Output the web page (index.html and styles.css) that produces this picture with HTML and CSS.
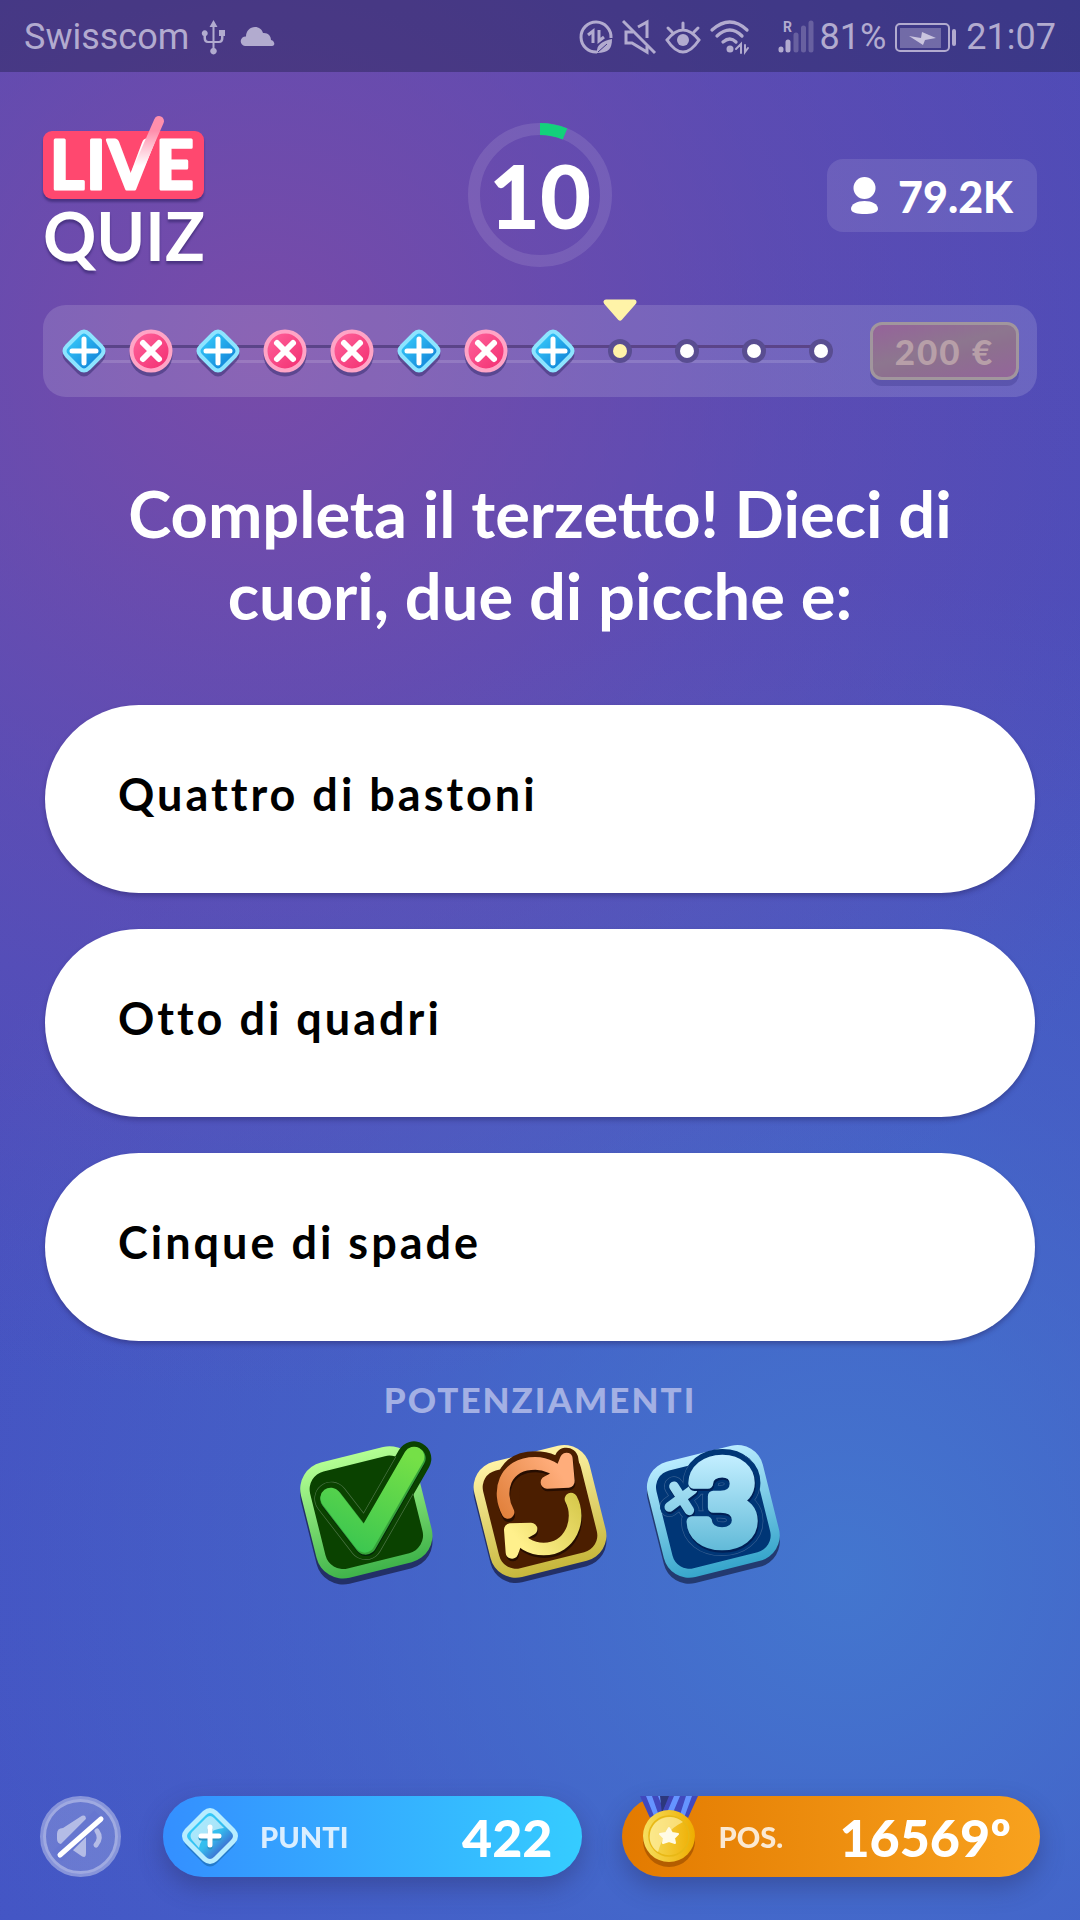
FILE: index.html
```html
<!DOCTYPE html>
<html lang="it">
<head>
<meta charset="utf-8">
<meta name="viewport" content="width=device-width, initial-scale=1">
<title>Live Quiz</title>
<link rel="stylesheet" href="styles.css">
</head>
<body>
<div class="screen">
  <div class="status">
    <span class="carrier">Swisscom</span>
    <svg class="ico-usb" width="23" height="34" viewBox="0 0 23 34" fill="currentColor"><path d="M11.500 0 15.500 7H12.500V21H16.500Q19 21 19 18V16H17V10H23V16H21.500V18Q21.500 23 17 23H12.500V28A3.300 3.300 0 1 1 10.500 28V23H6Q1.500 23 1.500 18V16A3 3 0 1 1 4 16V18Q4 21 6.500 21H10.500V7H7.500Z"/></svg>
    <svg class="ico-cloud" width="34" height="20" viewBox="0 0 34 20" fill="currentColor"><path d="M4 19A4.500 4.500 0 0 1 5 9.500C5 4 9 0 14 0C18 0 21 2.500 22 6C27 5.500 30 9 30 13C34 14 34.500 19 31 19Z"/></svg>
    <div class="status-right">
      <svg width="34" height="34" viewBox="0 0 34 34" fill="none" stroke="currentColor" stroke-width="3"><path d="M18 32A15 15 0 1 1 32 18"/><path d="M9 15 14 11V23M20 10V21L25 17"/><path d="M18 33C17 24 24 21 33 19C33 28 30 33 18 33Z" fill="currentColor" stroke="none"/><path d="M19 32 28 24" stroke="#43388a" stroke-width="1"/></svg>
      <svg width="34" height="34" viewBox="0 0 34 34" fill="none" stroke="currentColor" stroke-width="3"><path d="M1 1 33 33"/><path d="M16 7 25 2V18M11 12H4V23H10L25 32V26"/></svg>
      <svg width="36" height="34" viewBox="0 0 36 34" fill="none" stroke="currentColor" stroke-width="3" stroke-linecap="round"><path d="M2 20Q18 0 34 20Q18 44 2 20ZM18 3V9M3 8 7 12M33 8 29 12"/><circle cx="18" cy="20" r="6" fill="currentColor" stroke="none"/></svg>
      <svg width="40" height="34" viewBox="0 0 40 34" fill="none" stroke="currentColor" stroke-width="3.300" stroke-linecap="round"><path d="M2 10Q20-6 37 10M7 16Q20 4 32 16M13 22Q20 16 26 22"/><circle cx="20" cy="29" r="3.500" fill="currentColor" stroke="none"/><path d="M26 29 31 24V33M35 25V32L38 28" stroke-width="2"/></svg>
      <svg class="ico-signal" width="36" height="34" viewBox="0 0 36 34"><g stroke="currentColor" stroke-width="5" stroke-linecap="round"><path d="M3 29V30M10 22V30"/><path d="M18 15V30M25.500 8V30M33 3V30" opacity=".35"/></g><text x="5" y="12" class="roaming">R</text></svg>
      <span class="level">81%</span>
      <svg width="62" height="34" viewBox="0 0 62 34" fill="none"><rect x="1" y="4" width="53" height="27" rx="4" stroke="currentColor" stroke-width="2"/><rect x="5" y="8" width="41" height="20" fill="currentColor" opacity=".45"/><path d="M14 16 26 18 27 12 41 18 30 20 28 25Z" fill="#c9c4de"/><rect x="57" y="9" width="4" height="17" rx="2" fill="currentColor"/></svg>
      <time>21:07</time>
    </div>
  </div>

  <header class="top">
    <h1 class="brand">
      <svg width="164" height="158" viewBox="0 0 164 158" role="img" aria-label="Live Quiz">
        <defs><linearGradient id="arm" gradientUnits="userSpaceOnUse" x1="0" y1="50" x2="0" y2="6"><stop offset="0" stop-color="#fff"/><stop offset=".8" stop-color="#ff8fac"/></linearGradient></defs>
        <g class="lift"><rect y="15" width="161" height="68" rx="9" fill="#ff486f"/></g>
        <text class="brand-live" x="7" y="73">LIVE</text>
        <path d="M88 69 116 5" stroke="url(#arm)" stroke-width="10" stroke-linecap="round"/>
        <text class="brand-quiz lift" x="0" y="145">QUIZ</text>
      </svg>
    </h1>
    <div class="timer" role="timer">
      <svg width="144" height="144" viewBox="0 0 144 144" fill="none" stroke-width="12"><circle cx="72" cy="72" r="66" stroke="#fff" stroke-opacity=".11"/><path d="M72 6A66 66 0 0 1 97 11" stroke="#13d17b"/></svg>
      <span class="timer-value">10</span>
    </div>
    <div class="viewers">
      <svg width="27" height="38" viewBox="0 0 27 38" fill="#fff"><ellipse cx="13.500" cy="11" rx="11" ry="11"/><path d="M0 32C0 27 6 24 13.500 24S27 27 27 32C27 36 20 37 13.500 37S0 36 0 32Z"/></svg>
      <span>79.2K</span>
    </div>
  </header>

  <svg class="sprites" width="0" height="0" aria-hidden="true">
    <defs>
      <linearGradient id="blue" x1="0" y1="0" x2="1" y2="1"><stop offset=".15" stop-color="#35c8fa"/><stop offset=".85" stop-color="#1184d8"/></linearGradient>
      <linearGradient id="pink" x1="0" y1="0" x2="1" y2="1"><stop offset="0" stop-color="#ff659d"/><stop offset="1" stop-color="#f22c6f"/></linearGradient>
      <symbol id="plus" viewBox="0 0 44 50"><path d="M17 5Q22 0 27 5L39 17Q44 22 39 27L27 39Q22 44 17 39L5 27Q0 22 5 17Z" transform="translate(0 4)" fill="#45377d" stroke="#45377d" stroke-width="4" opacity=".65"/><path d="M17 5Q22 0 27 5L39 17Q44 22 39 27L27 39Q22 44 17 39L5 27Q0 22 5 17Z" fill="url(#blue)" stroke="#8de4ff" stroke-width="4"/><path d="M22 10V34M10 22H34" stroke="#fff" stroke-width="5" stroke-linecap="round"/></symbol>
      <symbol id="cross" viewBox="0 0 44 50"><circle cx="22" cy="26" r="21.500" fill="#45377d" opacity=".65"/><circle cx="22" cy="22" r="19.500" fill="url(#pink)" stroke="#ffa4c6" stroke-width="4"/><path d="M14 14 30 30M30 14 14 30" stroke="#fff" stroke-width="6" stroke-linecap="round"/></symbol>
      <symbol id="dot" viewBox="0 0 44 50"><circle cx="22" cy="22" r="12" fill="#594d91"/><circle cx="22" cy="22" r="7" fill="currentColor"/></symbol>
    </defs>
  </svg>

  <main>
    <section class="progress">
      <ol class="steps">
        <li><svg><use href="#plus"/></svg></li>
        <li><svg><use href="#cross"/></svg></li>
        <li><svg><use href="#plus"/></svg></li>
        <li><svg><use href="#cross"/></svg></li>
        <li><svg><use href="#cross"/></svg></li>
        <li><svg><use href="#plus"/></svg></li>
        <li><svg><use href="#cross"/></svg></li>
        <li><svg><use href="#plus"/></svg></li>
        <li class="current"><svg><use href="#dot"/></svg><svg class="pointer" viewBox="0 0 34 22"><path d="M3 3H31L17 19Z" fill="#fff3a8" stroke="#fff3a8" stroke-width="5" stroke-linejoin="round"/></svg></li>
        <li><svg><use href="#dot"/></svg></li>
        <li><svg><use href="#dot"/></svg></li>
        <li><svg><use href="#dot"/></svg></li>
      </ol>
      <div class="prize">200 €</div>
    </section>

    <h2 class="question">Completa il terzetto! Dieci di cuori, due di picche e:</h2>

    <div class="answers">
      <button class="answer" type="button">Quattro di bastoni</button>
      <button class="answer" type="button">Otto di quadri</button>
      <button class="answer" type="button">Cinque di spade</button>
    </div>

    <section class="boosts">
      <h3>POTENZIAMENTI</h3>
      <div class="boost-row">
        <button type="button" aria-label="Risposta giusta">
          <svg viewBox="55 205 411 444">
            <defs>
              <linearGradient id="gt" x1="0" y1="0" x2="0" y2="1"><stop offset="0" stop-color="#b3ff93"/><stop offset="1" stop-color="#3fb34a"/></linearGradient>
              <linearGradient id="gc" gradientUnits="userSpaceOnUse" x1="390" y1="260" x2="250" y2="550"><stop offset="0" stop-color="#75e047"/><stop offset="1" stop-color="#3dc750"/></linearGradient>
              <clipPath id="gi"><rect x="107" y="278" width="300" height="300" rx="55" transform="rotate(-14 257 428)"/></clipPath>
            </defs>
            <rect x="79" y="250" width="356" height="356" rx="82" transform="translate(0 18) rotate(-14 257 428)" fill="#233067"/>
            <rect x="79" y="250" width="356" height="356" rx="82" transform="rotate(-14 257 428)" fill="url(#gt)"/>
            <rect x="107" y="278" width="300" height="300" rx="55" transform="rotate(-14 257 428)" fill="#0a4200"/>
            <g fill="none" stroke-linecap="round" stroke-linejoin="round">
              <path d="M152 387 255 520 400 267" stroke="#0a4200" stroke-width="104"/>
              <path d="M152 387 255 520 400 267" stroke="#4d7545" stroke-width="102" clip-path="url(#gi)"/>
              <path d="M152 387 255 520 400 267" stroke="#0a4200" stroke-width="98"/>
              <path d="M153 393 256 526 401 271" stroke="#03230a" stroke-width="66"/>
              <path d="M152 389 255 522 402 266" stroke="#36a33a" stroke-width="66"/>
              <path d="M150 385 252 518 400 262" stroke="url(#gc)" stroke-width="62"/>
            </g>
          </svg>
        </button>
        <button type="button" aria-label="Cambia domanda">
          <svg viewBox="575 205 411 444">
            <defs>
              <linearGradient id="yt" x1="0" y1="0" x2="0" y2="1"><stop offset="0" stop-color="#fff3a6"/><stop offset="1" stop-color="#c7b73c"/></linearGradient>
              <linearGradient id="oa" gradientUnits="userSpaceOnUse" x1="670" y1="430" x2="840" y2="310"><stop offset="0" stop-color="#e2823e"/><stop offset="1" stop-color="#ffad7b"/></linearGradient>
              <linearGradient id="ya" gradientUnits="userSpaceOnUse" x1="720" y1="520" x2="890" y2="390"><stop offset="0" stop-color="#fff08c"/><stop offset="1" stop-color="#d8ca4e"/></linearGradient>
            </defs>
            <rect x="601" y="247" width="356" height="356" rx="78" transform="translate(0 16) rotate(-14 779 425)" fill="#233067"/>
            <rect x="601" y="247" width="356" height="356" rx="78" transform="rotate(-14 779 425)" fill="url(#yt)"/>
            <rect x="628" y="274" width="302" height="302" rx="52" transform="rotate(-14 779 425)" fill="#4b1e00"/>
            <g fill="none" stroke-linecap="round" stroke-linejoin="round">
              <path d="M683 380C672 310 710 281 765 281C800 281 830 295 845 315M858 270 868 335" stroke="#4b1e00" stroke-width="72"/>
              <g transform="translate(2 8)" stroke="#260d00" stroke-width="38"><path d="M683 430C650 370 670 281 765 281C800 281 830 300 848 328M858 268 864 335 800 338M872 388C905 450 870 538 790 538C750 538 718 515 706 492M695 548 690 480 752 478"/></g>
              <g stroke="url(#oa)" stroke-width="38"><path d="M683 428C650 368 670 281 765 281C800 281 830 300 848 322"/><path d="M858 268 864 335 800 338 838 318Z" fill="#ffad7b"/></g>
              <g stroke="url(#ya)" stroke-width="38"><path d="M872 388C905 450 870 538 790 538C750 538 718 515 706 492"/><path d="M695 548 690 480 752 478 712 500Z" fill="#fff08c"/></g>
            </g>
          </svg>
        </button>
        <button type="button" aria-label="Punti per tre">
          <svg viewBox="1095 205 411 444">
            <defs>
              <linearGradient id="bt" x1="0" y1="0" x2="0" y2="1"><stop offset="0" stop-color="#b9ecff"/><stop offset="1" stop-color="#36a5cb"/></linearGradient>
              <linearGradient id="b3" gradientUnits="userSpaceOnUse" x1="0" y1="260" x2="0" y2="545"><stop offset="0" stop-color="#c2eeff"/><stop offset="1" stop-color="#61bad8"/></linearGradient>
              <clipPath id="bi"><rect x="1149" y="274" width="302" height="302" rx="52" transform="rotate(-14 1300 425)"/></clipPath>
              <text id="three" x="1218" y="522">3</text>
              <path id="times" d="M1182 350 1228 422M1238 360 1168 412"/>
            </defs>
            <rect x="1122" y="247" width="356" height="356" rx="78" transform="translate(0 18) rotate(-14 1300 425)" fill="#233a70"/>
            <rect x="1122" y="247" width="356" height="356" rx="78" transform="rotate(-14 1300 425)" fill="url(#bt)"/>
            <rect x="1149" y="274" width="302" height="302" rx="52" transform="rotate(-14 1300 425)" fill="#003676"/>
            <g class="three" stroke-linejoin="round" stroke-linecap="round">
              <use href="#three" stroke="#003676" stroke-width="66"/>
              <g clip-path="url(#bi)" stroke="#355f91"><use href="#three" stroke-width="66"/><use href="#times" stroke-width="60"/></g>
              <use href="#three" stroke="#003676" stroke-width="62"/>
              <use href="#times" stroke="#003676" stroke-width="56"/>
              <use href="#times" y="6" x="2" stroke="#001f55" stroke-width="30"/>
              <use href="#times" stroke="url(#b3)" stroke-width="29"/>
              <use href="#three" x="2" y="7" fill="#001f55" stroke="#001f55" stroke-width="34"/>
              <use href="#three" fill="url(#b3)" stroke="url(#b3)" stroke-width="32"/>
            </g>
          </svg>
        </button>
      </div>
    </section>
  </main>

  <footer class="bottom">
    <button class="mute" type="button" aria-label="Audio">
      <svg viewBox="0 0 81 81" fill="none"><circle cx="40.500" cy="40.500" r="37.500" fill="#fff" fill-opacity=".2" stroke="#fff" stroke-opacity=".36" stroke-width="6"/><path d="M17 38Q17 32 23 32L40 21Q46 17 46 24V57Q46 64 40 59L24 48Q17 49 17 43Z" fill="#b4bce6"/><path d="M57 35Q62 42 56 49" stroke="#b4bce6" stroke-width="5" stroke-linecap="round"/><path d="M17 61 59 19" stroke="#6676d0" stroke-width="13"/><path d="M20 59 61 23" stroke="#fff" stroke-width="5" stroke-linecap="round"/></svg>
    </button>
    <div class="pill points">
      <svg width="58" height="66" viewBox="0 0 58 66"><defs><linearGradient id="gem" x1="0" y1="0" x2="1" y2="1"><stop offset=".25" stop-color="#35c9f8"/><stop offset=".55" stop-color="#34bdee"/><stop offset=".8" stop-color="#3e6fd2"/></linearGradient></defs><path d="M23 6Q29 1 35 6L52 23Q58 29 52 35L35 52Q29 57 23 52L6 35Q0 29 6 23Z" transform="translate(0 8)" fill="#1d6eb5" opacity=".7"/><path d="M22 7Q29 1 36 7L54 25Q60 32 54 39L36 57Q29 63 22 57L4 39Q-2 32 4 25Z" fill="#b8edff"/><path d="M25 11Q29 7 33 11L50 28Q54 32 50 36L33 53Q29 57 25 53L8 36Q4 32 8 28Z" fill="url(#gem)"/><path d="M25 14Q29 10 33 14L43 24C30 25 20 33 18 44L11 36Q8 32 11 28Z" fill="#fff" opacity=".58"/><path d="M29 26V43M20 34H38" stroke="#2b95c5" stroke-width="5" stroke-linecap="round"/><path d="M29 23V41M20 32H38" stroke="#fff" stroke-width="5" stroke-linecap="round"/></svg>
      <span class="pill-label">PUNTI</span><strong>422</strong>
    </div>
    <div class="pill rank">
      <svg width="58" height="81" viewBox="0 0 58 81"><path d="M0 0H28L24 22H10Z" fill="#4149bd"/><path d="M6 0H12L19 20H14ZM18 0H23L30 17H25Z" fill="#6594ff"/><path d="M20 0H30L22 18Z" fill="#2d387d"/><path d="M29 0H58L48 22H20Z" fill="#4149bd"/><path d="M34 0H40L32 19H26ZM46 0H52L44 22H39Z" fill="#6594ff"/><circle cx="29" cy="45" r="26" fill="#b45d00"/><linearGradient id="gold"><stop offset="0" stop-color="#f6df5e"/><stop offset="1" stop-color="#efad00"/></linearGradient><circle cx="29" cy="40" r="26" fill="url(#gold)"/><circle cx="29" cy="40" r="20" fill="none" stroke="#e8b816" stroke-width="1.500"/><path d="M43 26A20 20 0 0 0 11 48Q14 54 18 56Q23 36 43 26Z" fill="#fff4b3" opacity=".6"/><path d="M29 32 32 37 38 38 34 42 35 47 29 45 23 47 24 42 20 38 26 37Z" fill="#fffbe6" stroke="#fffbe6" stroke-width="2" stroke-linejoin="round"/></svg>
      <span class="pill-label">POS.</span><strong>16569º</strong>
    </div>
  </footer>
</div>
</body>
</html>
```
FILE: styles.css
```css
* { box-sizing: border-box; }

body {
  margin: 0;
  font-family: Lato, "Open Sans", sans-serif;
  color: #fff;
}

h1, h2, h3, ol { margin: 0; padding: 0; }
ol { list-style: none; }
svg { display: block; flex: none; overflow: visible; }
button { border: 0; padding: 0; background: none; font: inherit; color: inherit; cursor: pointer; }
.sprites { position: absolute; }

.screen {
  min-height: 100vh;
  display: flex;
  flex-direction: column;
  background:
    radial-gradient(circle 1050px at 24% 18%, rgba(124, 75, 167, .92), rgba(124, 75, 167, .36) 50%, rgba(124, 75, 167, 0)),
    radial-gradient(circle 1000px at 78% 82%, rgba(67, 122, 208, .9), rgba(67, 122, 208, .38) 50%, rgba(67, 122, 208, 0)),
    linear-gradient(#4a4bb8, #4453c4);
}

/* System status bar */
.status {
  display: flex;
  align-items: center;
  height: 72px;
  padding: 2px 24px 0;
  background: rgba(30, 30, 75, .42);
  color: #b2abcf;
  font: 36px/42px Roboto, sans-serif;
}
.ico-usb { margin-left: 13px; }
.ico-cloud { margin-left: 16px; }
.status-right { display: flex; align-items: center; gap: 9px; margin-left: auto; }
.ico-signal { margin-left: 19px; }
.level { margin-left: -3px; }
.roaming { font: bold 14px Roboto, sans-serif; fill: currentColor; }

/* Logo, timer, viewers */
.top {
  display: grid;
  grid-template-columns: 1fr auto 1fr;
  align-items: center;
  padding: 44px 43px 0;
}
.brand-live, .brand-quiz {
  font: 700 66px Lato, sans-serif;
  fill: #fff;
}
.brand-live {
  stroke: #fff;
  stroke-width: 3px;
  stroke-linejoin: round;
  letter-spacing: 2px;
}
.lift { filter: drop-shadow(0 3px 1px rgba(50, 35, 105, .6)); }
.timer { display: grid; place-items: center; }
.timer > * { grid-area: 1 / 1; }
.timer-value { font-size: 88px; line-height: 88px; font-weight: 900; }
.viewers {
  justify-self: end;
  display: flex;
  align-items: center;
  gap: 20px;
  height: 73px;
  padding: 2px 24px 0;
  border-radius: 16px;
  background: rgba(255, 255, 255, .11);
  font-size: 43px;
  font-weight: 900;
}

/* Round progress */
main { padding: 0 43px; }
.progress {
  display: flex;
  align-items: center;
  gap: 27px;
  height: 92px;
  margin-top: 31px;
  padding: 0 18px 0 19px;
  border-radius: 23px;
  background: rgba(255, 255, 255, .14);
}
.steps { position: relative; flex: 1; display: flex; justify-content: space-between; }
.steps::before {
  content: "";
  position: absolute;
  left: 22px;
  right: 22px;
  top: 16px;
  height: 12px;
  border-top: 3px solid #5b4489;
  border-bottom: 3px solid rgba(255, 255, 255, .14);
}
.steps li { position: relative; width: 44px; height: 44px; }
.steps svg { width: 44px; height: 50px; }
.steps .current { color: #fff3a8; }
.steps .pointer { position: absolute; left: 5px; top: -30px; width: 34px; height: 22px; }
.prize {
  width: 149px;
  height: 58px;
  border: 3px solid #a1969d;
  border-radius: 12px;
  background: linear-gradient(165deg, #95639a, #8d768f 45%, #8d708f 60%, #93659a);
  box-shadow: 0 6px 0 rgba(70, 65, 150, .45);
  color: #b79fa8;
  font-size: 35px;
  line-height: 52px;
  font-weight: 900;
  letter-spacing: 2px;
  text-align: center;
}

/* Question and answers */
.question {
  max-width: 860px;
  margin: 75px auto 0;
  font-size: 65px;
  line-height: 82px;
  font-weight: 700;
  text-align: center;
}
.answers { display: grid; gap: 36px; margin-top: 69px; padding: 0 2px; }
.answer {
  height: 188px;
  padding: 0 73px 10px;
  border-radius: 94px;
  background: #fff;
  box-shadow: 0 3px 5px rgba(35, 30, 90, .4);
  color: #000;
  font-size: 45px;
  font-weight: 700;
  letter-spacing: 3px;
  text-align: left;
}

/* Power-ups */
.boosts h3 {
  margin-top: 37px;
  color: #a3b0e4;
  font-size: 35px;
  line-height: 42px;
  font-weight: 900;
  letter-spacing: 2px;
  text-align: center;
}
.boost-row { display: flex; justify-content: center; gap: 36px; margin-top: 18px; }
.boost-row svg { width: 137px; height: 148px; }
.three { font: 600 340px Inter, sans-serif; fill: none; }

/* Sound, points, rank */
.bottom {
  display: flex;
  gap: 40px;
  margin-top: auto;
  padding: 40px 40px 43px;
}
.mute { margin-right: 2px; }
.mute svg { width: 81px; height: 81px; }
.pill {
  flex: 1;
  display: flex;
  align-items: center;
  height: 81px;
  padding: 0 29px 0 18px;
  border-radius: 41px;
  box-shadow: 0 10px 24px rgba(45, 50, 110, .45);
}
.points { background: linear-gradient(90deg, #348fff, #35ccff); }
.rank { background: linear-gradient(90deg, #e37a00, #f8a21e); }
.pill-label { margin-left: 21px; font-size: 29px; line-height: 36px; font-weight: 900; opacity: .82; }
.pill strong { margin-left: auto; font-size: 52px; line-height: 60px; font-weight: 900; }
```
